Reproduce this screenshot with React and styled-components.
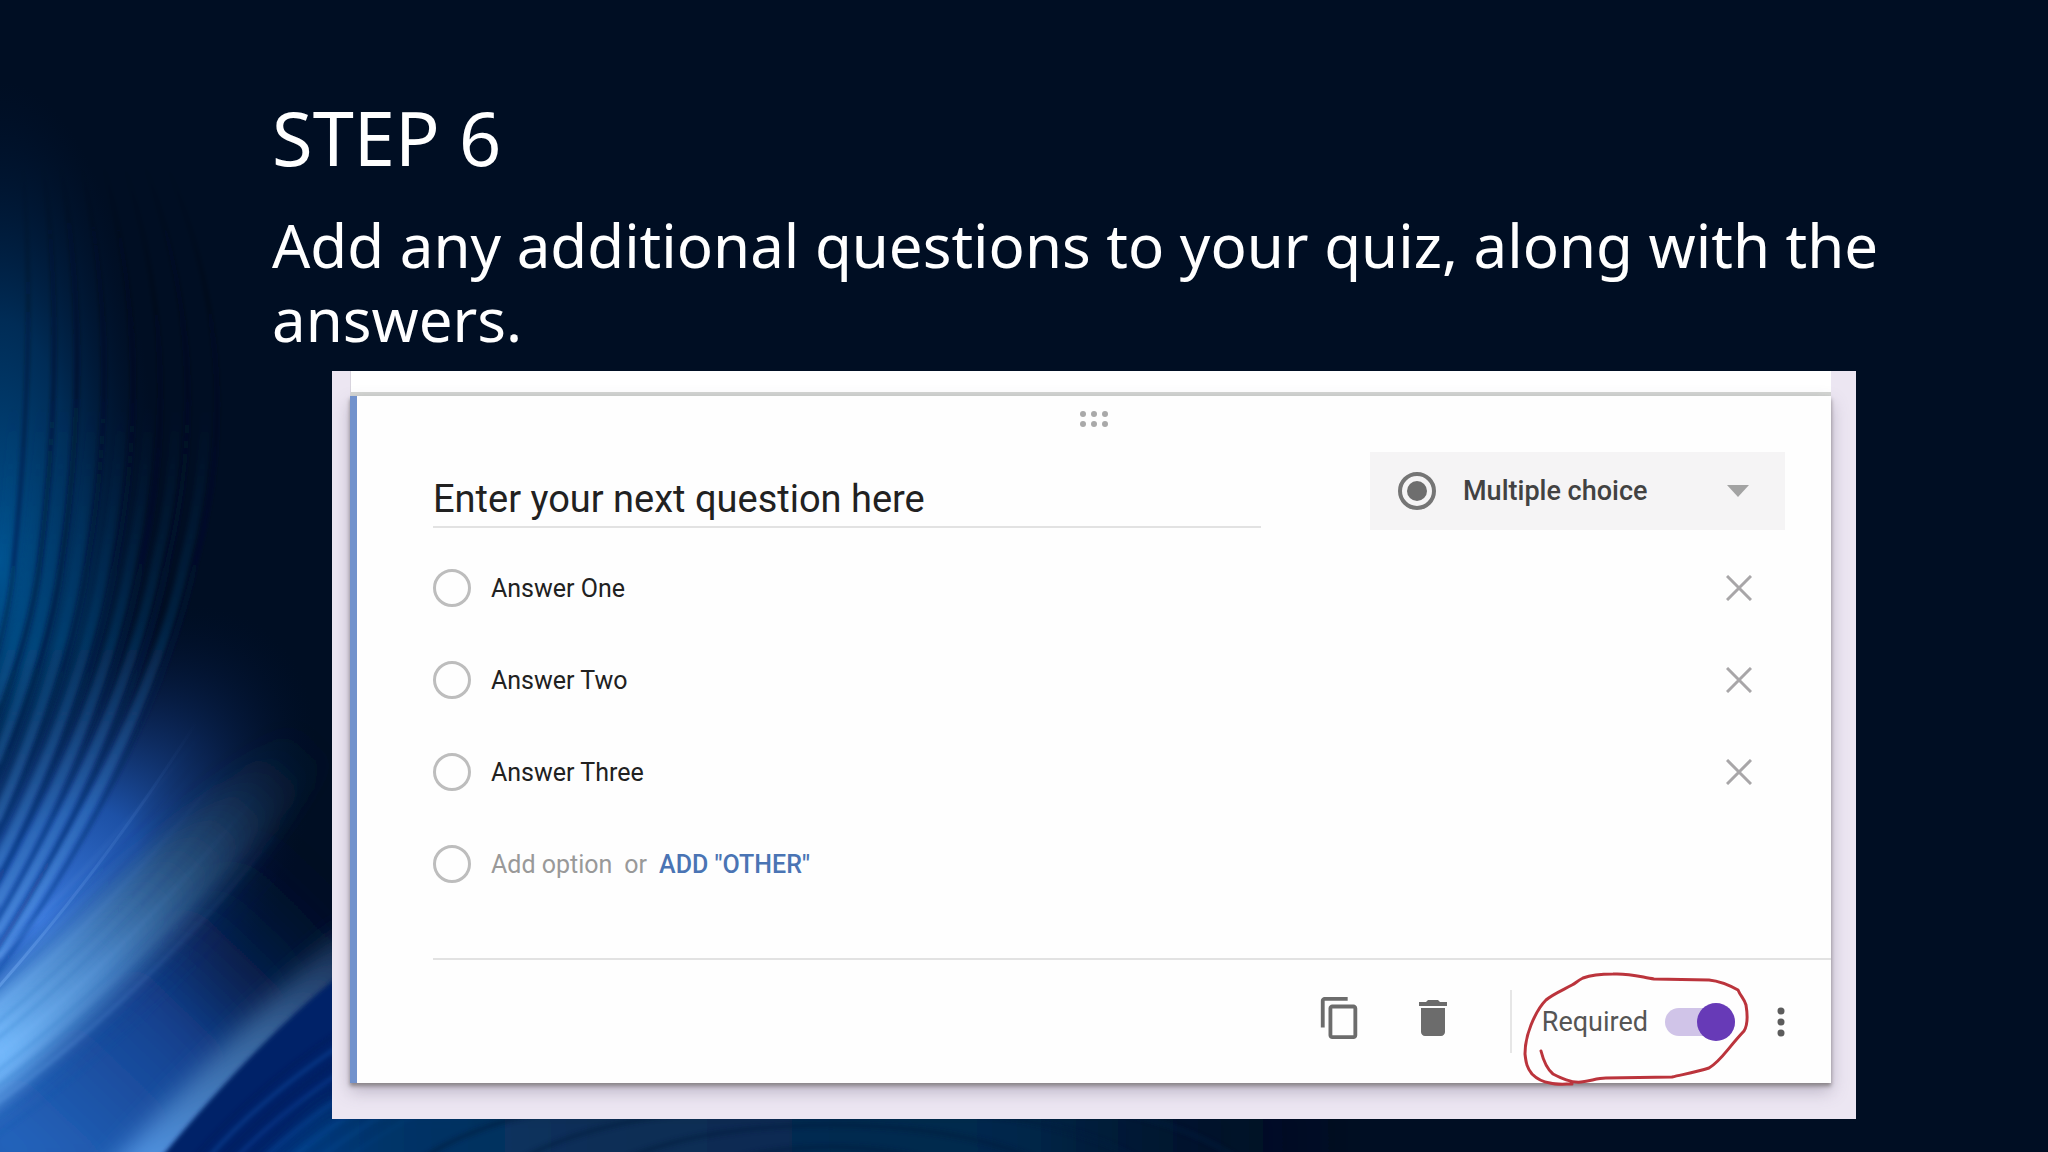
import React, { useState } from "react";
import styled, { createGlobalStyle } from "styled-components";
import { MdContentCopy, MdDelete } from "react-icons/md";

const GlobalStyle = createGlobalStyle`
  * {
    box-sizing: border-box;
  }
  body {
    margin: 0;
    background: #000e23;
  }
  button, input, select {
    font: inherit;
    color: inherit;
    margin: 0;
    padding: 0;
    border: none;
    background: none;
  }
`;

// x: position at mid height, end: height where the thread leaves on the left
const threads = [
  { x: 14, end: 655, w: 3 },
  { x: 40, end: 720, w: 4 },
  { x: 62, end: 780, w: 5 },
  { x: 88, end: 838, w: 4 },
  { x: 116, end: 884, w: 4 },
  { x: 142, end: 922, w: 3 },
  { x: 168, end: 950, w: 4 },
  { x: 196, end: 974, w: 3 },
];

const threadPath = ({ x, end }) => {
  const bend = 560 + (end - 560) * 0.44;
  return `M${x * 0.5} 40 C${x + 24} 220 ${x * 1.15 + 14} 400 ${x} 560 Q${x * 0.8} ${bend} -4 ${end}`;
};

const rays = [0, 1, 2, 3, 4, 5, 6, 7, 8, 9, 10, 11];

const Backdrop = () => (
  <BackdropSvg viewBox="0 0 2048 1152" preserveAspectRatio="none" aria-hidden="true">
    <defs>
      <filter id="soft" filterUnits="userSpaceOnUse" x="-200" y="-200" width="2400" height="1600">
        <feGaussianBlur stdDeviation="24" />
      </filter>
      <filter id="mid" filterUnits="userSpaceOnUse" x="-200" y="-200" width="2400" height="1600">
        <feGaussianBlur stdDeviation="12" />
      </filter>
      <filter id="fine" filterUnits="userSpaceOnUse" x="-200" y="-200" width="2400" height="1600">
        <feGaussianBlur stdDeviation="2" />
      </filter>
      <radialGradient id="teal">
        <stop offset="0" stopColor="#005a9c" stopOpacity="0.9" />
        <stop offset="0.5" stopColor="#004078" stopOpacity="0.6" />
        <stop offset="1" stopColor="#001a40" stopOpacity="0" />
      </radialGradient>
      <radialGradient id="blue">
        <stop offset="0" stopColor="#3a78dc" />
        <stop offset="0.35" stopColor="#2058b4" stopOpacity="0.9" />
        <stop offset="0.65" stopColor="#10306c" stopOpacity="0.6" />
        <stop offset="1" stopColor="#001030" stopOpacity="0" />
      </radialGradient>
      <linearGradient id="beam" gradientUnits="userSpaceOnUse" x1="0" y1="1050" x2="300" y2="720">
        <stop offset="0" stopColor="#72b8fb" />
        <stop offset="0.3" stopColor="#4a86c8" />
        <stop offset="0.6" stopColor="#2a547c" stopOpacity="0.8" />
        <stop offset="1" stopColor="#10243e" stopOpacity="0" />
      </linearGradient>
      <linearGradient id="beamTwo" gradientUnits="userSpaceOnUse" x1="120" y1="1152" x2="350" y2="940">
        <stop offset="0" stopColor="#5296e6" />
        <stop offset="0.6" stopColor="#37649a" />
        <stop offset="1" stopColor="#1a3056" />
      </linearGradient>
      <linearGradient id="body" gradientUnits="userSpaceOnUse" x1="20" y1="1152" x2="300" y2="860">
        <stop offset="0" stopColor="#2464bc" />
        <stop offset="0.5" stopColor="#14408e" />
        <stop offset="1" stopColor="#04123a" stopOpacity="0" />
      </linearGradient>
      <linearGradient id="thread" gradientUnits="userSpaceOnUse" x1="0" y1="160" x2="0" y2="980">
        <stop offset="0" stopColor="#000a20" stopOpacity="0" />
        <stop offset="0.25" stopColor="#000a20" stopOpacity="0.5" />
        <stop offset="0.7" stopColor="#022250" stopOpacity="0.8" />
        <stop offset="1" stopColor="#1040a0" stopOpacity="0.7" />
      </linearGradient>
      <linearGradient id="rib" gradientUnits="userSpaceOnUse" x1="0" y1="400" x2="0" y2="960">
        <stop offset="0" stopColor="#0b4a80" stopOpacity="0" />
        <stop offset="0.4" stopColor="#0f5c9c" stopOpacity="0.25" />
        <stop offset="0.8" stopColor="#4488d0" stopOpacity="0.45" />
        <stop offset="1" stopColor="#62a4f4" stopOpacity="0.6" />
      </linearGradient>
      <linearGradient id="ray" gradientUnits="userSpaceOnUse" x1="0" y1="1000" x2="220" y2="740">
        <stop offset="0" stopColor="#84bcff" stopOpacity="0.4" />
        <stop offset="1" stopColor="#5080d0" stopOpacity="0" />
      </linearGradient>
      <linearGradient id="rayDark" gradientUnits="userSpaceOnUse" x1="0" y1="1000" x2="220" y2="740">
        <stop offset="0" stopColor="#1c54a8" stopOpacity="0.3" />
        <stop offset="1" stopColor="#061a44" stopOpacity="0" />
      </linearGradient>
      <linearGradient id="floor" gradientUnits="userSpaceOnUse" x1="200" y1="0" x2="1360" y2="0">
        <stop offset="0" stopColor="#0446a4" />
        <stop offset="0.16" stopColor="#003468" />
        <stop offset="0.35" stopColor="#0c2e56" />
        <stop offset="0.7" stopColor="#00284c" />
        <stop offset="1" stopColor="#000c24" stopOpacity="0" />
      </linearGradient>
    </defs>
    <rect width="2048" height="1152" fill="#000e23" />
    <ellipse cx="0" cy="560" rx="160" ry="480" fill="url(#teal)" />
    <ellipse cx="40" cy="920" rx="370" ry="200" transform="rotate(-52 40 920)" fill="url(#blue)" />
    <path d="M-60 1200 L-40 1080 L300 800 L420 860 L300 1010 L140 1200Z" fill="url(#body)" filter="url(#soft)" />
    {threads.map((t) => (
      <path
        key={`rib${t.x}`}
        d={threadPath({ x: t.x - 11, end: t.end - 18 })}
        fill="none"
        stroke="url(#rib)"
        strokeWidth="10"
        filter="url(#fine)"
      />
    ))}
    {threads.map((t) => (
      <path
        key={t.x}
        d={threadPath(t)}
        fill="none"
        stroke="url(#thread)"
        strokeWidth={t.w}
        filter="url(#fine)"
      />
    ))}
    <path d="M-40 1020 Q140 860 330 690 L330 760 Q180 940 -40 1130Z" fill="url(#beam)" filter="url(#mid)" />
    {rays.map((i) => (
      <path
        key={i}
        d={`M-5 ${960 + i * 16} Q${100 + i * 5} ${860 + i * 15} ${220 + i * 6} ${710 + i * 14}`}
        fill="none"
        stroke={i % 3 ? "url(#rayDark)" : "url(#ray)"}
        strokeWidth="2"
        filter="url(#fine)"
      />
    ))}
    <path d="M-5 990 Q110 860 205 708" fill="none" stroke="url(#ray)" strokeWidth="3" />
    <path d="M80 1200 Q230 1030 350 925 L360 985 Q260 1060 180 1200Z" fill="url(#beamTwo)" filter="url(#mid)" />
    <path d="M150 1170 Q250 1046 340 974 L500 1000 L460 1170Z" fill="#002068" filter="url(#fine)" />
    <path d="M225 1200 L330 1100 L1360 1100 L1360 1200Z" fill="url(#floor)" filter="url(#mid)" />
    {rays.map((i) => (
      <path
        key={i}
        d={`M${195 + i * 14} 1156 Q${250 + i * 16} ${1090 + i} ${340 + i * 22} 1030`}
        fill="none"
        stroke={i % 2 ? "#1c68cc" : "#001850"}
        strokeWidth="3"
        opacity={0.4 - i * 0.03}
        filter="url(#fine)"
      />
    ))}
    {[0, 1, 2, 3].map((i) => (
      <ellipse
        key={i}
        cx="830"
        cy="1200"
        rx={150 + i * 95}
        ry={54 + i * 22}
        fill="none"
        stroke="#001c3c"
        strokeWidth="5"
        opacity="0.5"
        filter="url(#fine)"
      />
    ))}
  </BackdropSvg>
);

const answers = ["Answer One", "Answer Two", "Answer Three"];

const App = () => {
  const [question, setQuestion] = useState("Enter your next question here");
  const [list, setList] = useState(answers);
  const [required, setRequired] = useState(true);

  const removeAnswer = (index) => {
    const newList = [...list];
    newList.splice(index, 1);
    setList(newList);
  };

  return (
    <Slide>
      <GlobalStyle />
      <Backdrop />
      <Heading>
        <Title>STEP 6</Title>
        <Lead>Add any additional questions to your quiz, along with the answers.</Lead>
      </Heading>
      <Frame>
        <PreviousCard />
        <Card>
          <DragHandle viewBox="0 0 30 18" aria-hidden="true">
            {[4, 15, 26].map((x) => (
              <g key={x}>
                <circle cx={x} cy="4" r="3" />
                <circle cx={x} cy="14" r="3" />
              </g>
            ))}
          </DragHandle>
          <QuestionRow>
            <QuestionInput
              type="text"
              aria-label="Question"
              value={question}
              onChange={(e) => setQuestion(e.target.value)}
            />
            <TypeBox>
              <TypeIcon viewBox="0 0 38 38" aria-hidden="true">
                <circle cx="19" cy="19" r="17" fill="none" stroke="#757575" strokeWidth="4" />
                <circle cx="19" cy="19" r="10" fill="#6e6e6e" />
              </TypeIcon>
              <TypeSelect aria-label="Question type" defaultValue="multiple">
                <option value="multiple">Multiple choice</option>
                <option value="checkboxes">Checkboxes</option>
              </TypeSelect>
              <Caret viewBox="0 0 22 12" aria-hidden="true">
                <path d="M0 0h22L11 12z" />
              </Caret>
            </TypeBox>
          </QuestionRow>
          <Options>
            {list.map((item, index) => (
              <Option key={item}>
                <OptionLabel>
                  <Radio type="radio" name="answer" />
                  {item}
                </OptionLabel>
                <RemoveButton aria-label={`Remove ${item}`} onClick={() => removeAnswer(index)}>
                  <svg viewBox="0 0 26 26" width="26" height="26" aria-hidden="true">
                    <path d="M1 1l24 24M25 1L1 25" fill="none" stroke="#a8a6a8" strokeWidth="3" />
                  </svg>
                </RemoveButton>
              </Option>
            ))}
            <Option>
              <AddGroup>
                <Radio type="radio" name="answer" aria-label="New option" />
                <AddButton>Add option</AddButton>
                <Or>or</Or>
                <OtherButton>ADD "OTHER"</OtherButton>
              </AddGroup>
            </Option>
          </Options>
          <Footer>
            <Tools>
              <ToolButton aria-label="Duplicate">
                <MdContentCopy size={46} />
              </ToolButton>
              <ToolButton aria-label="Delete">
                <MdDelete size={48} />
              </ToolButton>
            </Tools>
            <Separator />
            <RequiredGroup>
              <RequiredLabel htmlFor="required">Required</RequiredLabel>
              <Toggle
                id="required"
                type="checkbox"
                role="switch"
                checked={required}
                onChange={(e) => setRequired(e.target.checked)}
              />
              <PenCircle viewBox="0 0 232 120" aria-hidden="true">
                <path d="M20 82 C22 90 26 100 32 105 C40 109 50 114 60 113 C70 112 76 109 85 109 L151 108 C164 105 176 103 188 99 C200 92 206 80 223 62 C228 54 226 42 225 36 C223 29 220 28 217 21 C208 16 198 12 188 11 L133 10 C120 8 108 4 92 5 C80 5 70 6 62 9 C56 12 55 14 51 16 C42 21 32 25 25 31 C18 38 14 46 10 56 C6 66 4 74 4 85 C5 94 6 99 11 105 C16 110 22 113 29 114 C36 116 44 115 51 115" />
              </PenCircle>
            </RequiredGroup>
            <MoreButton aria-label="More options">
              <svg viewBox="0 0 8 30" width="8" height="30" fill="#5c5c5c" aria-hidden="true">
                <circle cx="4" cy="4" r="3.5" />
                <circle cx="4" cy="15" r="3.5" />
                <circle cx="4" cy="26" r="3.5" />
              </svg>
            </MoreButton>
          </Footer>
        </Card>
      </Frame>
    </Slide>
  );
};

const Slide = styled.main`
  position: relative;
  min-height: 100vh;
  padding: 90px 192px 34px 272px;
  overflow: hidden;
`;

const BackdropSvg = styled.svg`
  position: absolute;
  inset: 0;
  width: 100%;
  height: 100%;
`;

const Heading = styled.header`
  position: relative;
  margin-right: -40px;
  color: #fff;
  font-family: "Noto Sans", sans-serif;
`;

const Title = styled.h1`
  margin: 0 0 22px;
  font-size: 74px;
  font-weight: 400;
  line-height: 96px;
`;

const Lead = styled.p`
  margin: 0 0 15px;
  font-size: 60px;
  line-height: 74px;
`;

const Frame = styled.section`
  position: relative;
  margin-left: 60px;
  padding: 0 25px 36px 18px;
  background: #ece6f2;
  color: #212121;
  font-family: Roboto, sans-serif;
  font-size: 25px;
`;

const PreviousCard = styled.div`
  height: 25px;
  background: #fff;
  border-left: 1px solid #d8d4de;
  border-bottom: 4px solid #d3d5d2;
`;

const Card = styled.article`
  padding-top: 14px;
  border-left: 7px solid #7292cc;
  background: #fefefe;
  box-shadow: 0 3px 4px #8a8488, 0 8px 16px rgba(90, 80, 110, 0.35);
`;

const DragHandle = styled.svg`
  display: block;
  width: 30px;
  height: 18px;
  margin: 0 auto;
  fill: #a9a9a9;
`;

const QuestionRow = styled.div`
  display: flex;
  align-items: flex-start;
  gap: 109px;
  padding: 24px 46px 12px 76px;
`;

const QuestionInput = styled.input`
  && {
    flex: 1;
    min-width: 0;
    height: 76px;
    padding-top: 20px;
    border-bottom: 2px solid #e2e2e2;
    border-radius: 0;
    font-size: 38px;
    outline: none;
  }
`;

const TypeBox = styled.div`
  display: flex;
  align-items: center;
  width: 415px;
  height: 78px;
  padding: 0 36px 0 28px;
  background: #f5f4f5;
`;

const TypeIcon = styled.svg`
  width: 38px;
  height: 38px;
  margin-right: 27px;
`;

const TypeSelect = styled.select`
  && {
    flex: 1;
    min-width: 0;
    appearance: none;
    color: #424242;
    font-size: 27px;
    font-weight: 500;
    outline: none;
  }
`;

const Caret = styled.svg`
  width: 22px;
  height: 12px;
  fill: #a3a3a3;
`;

const Options = styled.ul`
  margin: 0;
  padding: 0 72px 48px 76px;
  list-style: none;
`;

const Option = styled.li`
  display: flex;
  align-items: center;
  justify-content: space-between;
  height: 92px;
`;

const OptionLabel = styled.label`
  display: flex;
  align-items: center;
`;

const AddGroup = styled.div`
  display: flex;
  align-items: center;
  color: #999;
`;

const Radio = styled.input`
  && {
    appearance: none;
    width: 38px;
    height: 38px;
    margin-right: 20px;
    border: 3px solid #bdbdbd;
    border-radius: 50%;
  }
`;

const RemoveButton = styled.button`
  display: flex;
  align-items: center;
  justify-content: center;
  width: 40px;
  height: 40px;
`;

const AddButton = styled.button`
  white-space: nowrap;
`;

const Or = styled.span`
  margin: 0 12px;
`;

const OtherButton = styled.button`
  && {
    color: #4a74b4;
    font-weight: 500;
  }
`;

const Footer = styled.footer`
  display: flex;
  align-items: center;
  justify-content: flex-end;
  height: 125px;
  margin-left: 76px;
  padding-right: 30px;
  border-top: 2px solid #e2e2e2;
`;

const Tools = styled.div`
  display: flex;
  gap: 45px;
  padding-bottom: 8px;
`;

const ToolButton = styled.button`
  && {
    display: flex;
    align-items: center;
    justify-content: center;
    width: 48px;
    height: 48px;
    color: #6c6c6c;
  }
`;

const Separator = styled.div`
  width: 2px;
  height: 63px;
  margin: 0 30px 0 53px;
  background: #e6e6e6;
`;

const RequiredGroup = styled.div`
  position: relative;
  display: flex;
  align-items: center;
  gap: 17px;
  height: 70px;
`;

const RequiredLabel = styled.label`
  color: #555;
  font-size: 27px;
`;

const Toggle = styled.input`
  && {
    display: flex;
    align-items: center;
    justify-content: ${({ checked }) => (checked ? "flex-end" : "flex-start")};
    appearance: none;
    width: 70px;
    height: 28px;
    border-radius: 14px;
    background: #d0c4e8;
  }

  &&::before {
    content: "";
    width: 38px;
    height: 38px;
    border-radius: 50%;
    flex: none;
    background: ${({ checked }) => (checked ? "#673ab7" : "#f1f1f1")};
  }
`;

const PenCircle = styled.svg`
  position: absolute;
  top: -18px;
  left: -21px;
  width: 232px;
  height: 120px;
  fill: none;
  stroke: #bb343c;
  stroke-width: 3;
  stroke-linecap: round;
  pointer-events: none;
`;

const MoreButton = styled.button`
  display: flex;
  justify-content: center;
  width: 40px;
  margin-left: 26px;
`;

export default App;
